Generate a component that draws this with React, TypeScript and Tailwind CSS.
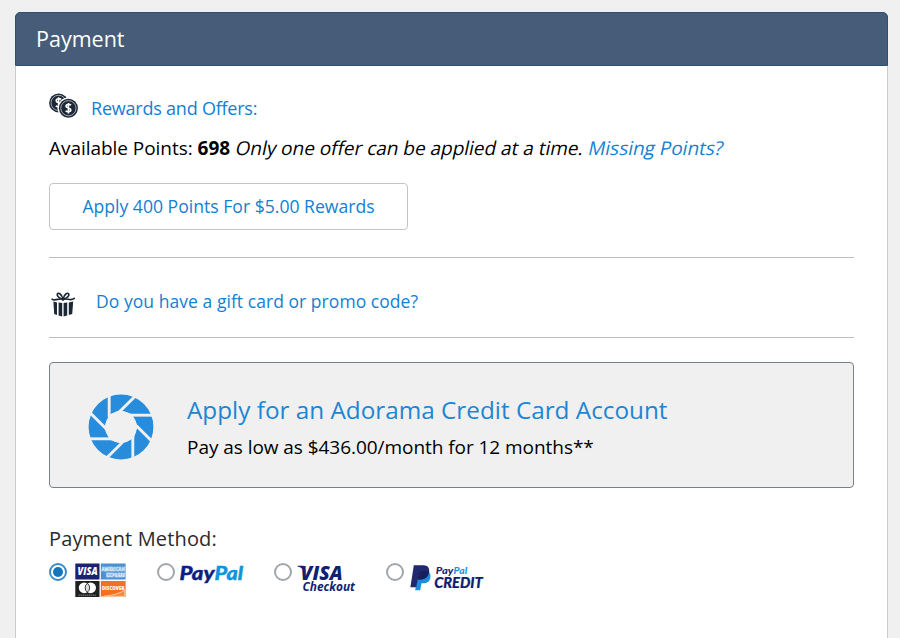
import type { ReactNode } from "react";

const BLADES = [0, 45, 90, 135, 180, 225, 270, 315];

function CoinsIcon() {
  return (
    <svg width="29" height="25" viewBox="0 0 29 25" className="shrink-0">
      <g transform="translate(9.6 9.9)">
        <circle r="9.5" fill="#1c2836" />
        <circle r="7.6" fill="none" stroke="#c5cad0" strokeWidth="0.8" />
        <path d="M2.6-3.4C1-4.8-2.6-4.4-2.4-2C-2.2 0.2 2.5-0.4 2.5 2C2.5 4-1 4.4-2.8 2.9M0-5.6V5.6" fill="none" stroke="#fff" strokeWidth="1.6" />
      </g>
      <g transform="translate(19.4 15.2)">
        <circle r="10.8" fill="#fff" />
        <circle r="9.5" fill="#1c2836" />
        <circle r="7.6" fill="none" stroke="#c5cad0" strokeWidth="0.8" />
        <path d="M2.6-3C1-4.4-2.6-4-2.4-1.8C-2.2 0.2 2.5-0.4 2.5 1.9C2.5 3.9-1 4-2.8 2.6M0-5.3V5.3" fill="none" stroke="#fff" strokeWidth="1.6" />
      </g>
    </svg>
  );
}

function GiftIcon() {
  return (
    <svg width="25" height="25" viewBox="0 0 25 25" className="shrink-0">
      <g fill="none" stroke="#1c2836" strokeWidth="1.7" strokeLinecap="round">
        <path d="M12 7.5C9.5 6.5 5.8 4.5 6.3 2.2C6.8 0 10.8 1.5 12 7.5Z" />
        <path d="M12 7.5C14.5 6.5 18.4 4.4 17.8 2.2C17.2 0 13.2 1.5 12 7.5Z" />
        <path d="M12 7.5C8.5 5.5 4.5 9.5 1.2 7.2M12 7.5C15.5 5.5 19.5 9.5 23.2 6.4" />
      </g>
      <path d="M2.4 9.6L6 10.4V23L3.2 22ZM7.6 10.4L11.2 10.9V24.4L7.6 23.5ZM12.6 10.9L16.2 10.4V23.5L12.6 24.4ZM17.8 10.4L22.2 9.4L21.2 22L17.8 23Z" fill="#1c2836" />
    </svg>
  );
}

function ApertureLogo() {
  return (
    <svg width="66" height="66" viewBox="-33 -33 66 66" className="shrink-0">
      <circle r="32.4" fill="#268cdb" />
      <polygon points="-11.7,-12.5 -1,-17 11,-13 16.5,-1 13,11 1,16.7 -11,13 -17,1" fill="#f0f0f0" />
      <circle r="15.8" fill="#f0f0f0" />
      {BLADES.map((angle) => (
        <path key={angle} d="M-11.8-34V-10" stroke="#f0f0f0" strokeWidth="2.9" transform={`rotate(${angle})`} />
      ))}
    </svg>
  );
}

function CardLogos() {
  return (
    <svg width="52" height="35" viewBox="0 0 52 35" overflow="visible" fontFamily="Open Sans, sans-serif" fontWeight="800">
      <rect x="0.3" y="0.5" width="24.2" height="16" fill="#1b2370" />
      <text x="2.6" y="12.3" fontSize="10.5" fontStyle="italic" fill="#fff" textLength="20" lengthAdjust="spacingAndGlyphs">VISA</text>
      <rect x="25.8" y="0.5" width="24.8" height="16" fill="#4a90d2" />
      <g fill="#4a90d2" stroke="#e2effa" strokeWidth="0.6" fontSize="5.6">
        <text x="26.4" y="8" textLength="23.6" lengthAdjust="spacingAndGlyphs">AMERICAN</text>
        <text x="31" y="13.6" textLength="19" lengthAdjust="spacingAndGlyphs">EXPRESS</text>
      </g>
      <rect x="0.3" y="18" width="24.2" height="16" fill="#202020" />
      <circle cx="9.2" cy="24.8" r="5.4" fill="#fff" />
      <circle cx="15.6" cy="24.8" r="5.4" fill="#fff" />
      <path d="M12.4 20.4a5.4 5.4 0 0 0 0 8.8a5.4 5.4 0 0 0 0-8.8Z" fill="#ddd" stroke="#202020" strokeWidth="0.9" />
      <path d="M3.5 32.2H21.5" stroke="#999" strokeWidth="0.8" strokeDasharray="1.5 0.5" />
      <rect x="25.8" y="18" width="24.8" height="16" fill="#f26f24" />
      <path d="M31 33.2C38 32.3 46 30 50 26.5V33.4H31Z" fill="#f7883c" />
      <path d="M26.3 33.4H49.8V27C46 30 38 32.3 29 33.2" stroke="#fde0c8" strokeWidth="0.8" fill="none" />
      <text x="27" y="26.8" fontSize="5.6" fill="#fff" textLength="22.4" lengthAdjust="spacingAndGlyphs">DISCOVER</text>
    </svg>
  );
}

function PayPalLogo() {
  return (
    <svg width="66" height="22" viewBox="0 0 66 22" overflow="visible" fontFamily="Lato, sans-serif" fontWeight="900" fontStyle="italic" fontSize="19.5">
      <text x="0.5" y="16" fill="#0b1f83" stroke="#0b1f83" strokeWidth="0.4" textLength="35" lengthAdjust="spacingAndGlyphs">Pay</text>
      <text x="35.4" y="16" fill="#0d95df" stroke="#0d95df" strokeWidth="0.4" textLength="28.6" lengthAdjust="spacingAndGlyphs">Pal</text>
    </svg>
  );
}

function VisaCheckoutLogo() {
  return (
    <svg width="60" height="32" viewBox="0 0 60 32" overflow="visible" fill="#131f70" fontStyle="italic">
      <path d="M0.6 1.8H6.5L8.6 9C7 5.4 4 3.2 0.6 2.4Z" />
      <text x="3.6" y="15.9" fontFamily="Open Sans, sans-serif" fontWeight="800" fontSize="20" textLength="42" lengthAdjust="spacingAndGlyphs">VISA</text>
      <text x="5.5" y="26.5" fontFamily="Open Sans, sans-serif" fontWeight="700" fontSize="11.8" textLength="52.5" lengthAdjust="spacingAndGlyphs">Checkout</text>
    </svg>
  );
}

function PayPalCreditLogo() {
  return (
    <svg width="76" height="30" viewBox="0 0 76 30" overflow="visible" fontFamily="Lato, sans-serif" fontStyle="italic" fontWeight="900">
      <path d="M7 7H17.5C20.3 8.5 21 11 20.3 14C19.4 18 16.4 19.3 12.8 19.3H11.5L10.2 26.3H5.2L5.8 23Z" fill="#1b8fdc" />
      <path d="M3.8 1.2H13.5C17.8 1.2 19.8 4 19 8.3C18.2 13.3 14.8 15.6 10.3 15.6H7.6L6.2 23.3H0.4Z" fill="#202a6c" />
      <path d="M19.2 7.1C18.5 12.8 15 15.6 10.3 15.6H7.6L6.7 20.8L8.5 11.8C8.9 8.8 10.2 7.1 13 7.1Z" fill="#17205c" />
      <text x="25.8" y="9.8" fontSize="9" fill="#17256f" textLength="17.5" lengthAdjust="spacingAndGlyphs">Pay</text>
      <text x="43.6" y="9.8" fontSize="9" fill="#1b93db" textLength="13.6" lengthAdjust="spacingAndGlyphs">Pal</text>
      <text x="24.2" y="23.9" fontSize="14.5" fill="#101d70" stroke="#101d70" strokeWidth="0.2" textLength="48.6" lengthAdjust="spacingAndGlyphs">CREDIT</text>
    </svg>
  );
}

function PaymentOption({ checked, className, children }: { checked?: boolean; className: string; children: ReactNode }) {
  return (
    <label className={`flex shrink-0 items-start ${className}`}>
      <span className={`flex size-[18px] shrink-0 items-center justify-center rounded-full border-2 bg-white ${checked ? "border-[#3a8cca]" : "border-[#a0a8ad]"}`}>
        {checked && <span className="size-[10px] rounded-full bg-[#1475bd]" />}
      </span>
      {children}
    </label>
  );
}

export default function App() {
  return (
    <div className="h-[638px] overflow-hidden bg-[#f0f0f0] pl-[15px] pr-[12px] pt-3 font-['Open_Sans',sans-serif] text-black">
      <div className="h-[640px]">
        <header className="flex h-[54px] items-center rounded-t-[5px] border border-[#2f4f70] bg-[#465c78] pb-px pl-[20px] text-[21.5px] leading-none text-white">
          <h1>Payment</h1>
        </header>
        <main className="h-[590px] border-x border-[#c9cbcd] bg-white px-[33px] pt-[27px]">
          <div className="flex h-[28px] items-start">
            <CoinsIcon />
            <h2 className="ml-[13px] mt-[3px] text-[18px] leading-6 tracking-[-0.22px] text-[#1480d2]">Rewards and Offers:</h2>
          </div>
          <p className="mt-[15px] whitespace-nowrap text-[19px] leading-6 tracking-[-0.04px]">
            Available Points: <b>698</b>{" "}
            <i className="ml-px inline-block -skew-x-12 not-italic tracking-[-0.02px]">Only one offer can be applied at a time. <a className="text-[#1480d2]">Missing Points?</a></i>
          </p>
          <button className="mt-[23px] flex h-[47px] w-[359px] items-center justify-center rounded border border-[#c4c4c4] pb-px text-[17.6px] text-[#1480d2]">
            Apply 400 Points For $5.00 Rewards
          </button>
          <hr className="mt-[27px] border-[#bcbcbc]" />
          <div className="flex h-[79px] items-start pl-[2px] pt-[34px]">
            <GiftIcon />
            <a className="ml-[20px] -mt-[3px] text-[17.5px] leading-6 tracking-[0.05px] text-[#1480d2]">Do you have a gift card or promo code?</a>
          </div>
          <hr className="border-[#bcbcbc]" />
          <section className="mt-[24px] flex h-[126px] items-center rounded border border-[#77818b] bg-[#f0f0f0] pl-[38px] pt-1">
            <ApertureLogo />
            <div className="ml-[33px] mt-[2px]">
              <h2 className="text-[24.3px] leading-[38px] text-[#1c86d4]">Apply for an Adorama Credit Card Account</h2>
              <p className="text-[19px] leading-9 tracking-[-0.05px]">Pay as low as $436.00/month for 12 months**</p>
            </div>
          </section>
          <h2 className="mt-[37px] text-[20px] leading-7 tracking-[0.15px] text-[#2b2b2b]">Payment Method:</h2>
          <div className="mt-[10px] flex h-[36px] items-start">
            <PaymentOption checked className="w-[108px]">
              <span className="ml-2"><CardLogos /></span>
            </PaymentOption>
            <PaymentOption className="w-[117px]">
              <span className="ml-1 mt-px"><PayPalLogo /></span>
            </PaymentOption>
            <PaymentOption className="w-[112px]">
              <span className="ml-[5px] mt-px"><VisaCheckoutLogo /></span>
            </PaymentOption>
            <PaymentOption className="w-[100px]">
              <span className="ml-[6px] mt-px"><PayPalCreditLogo /></span>
            </PaymentOption>
          </div>
        </main>
      </div>
    </div>
  );
}
